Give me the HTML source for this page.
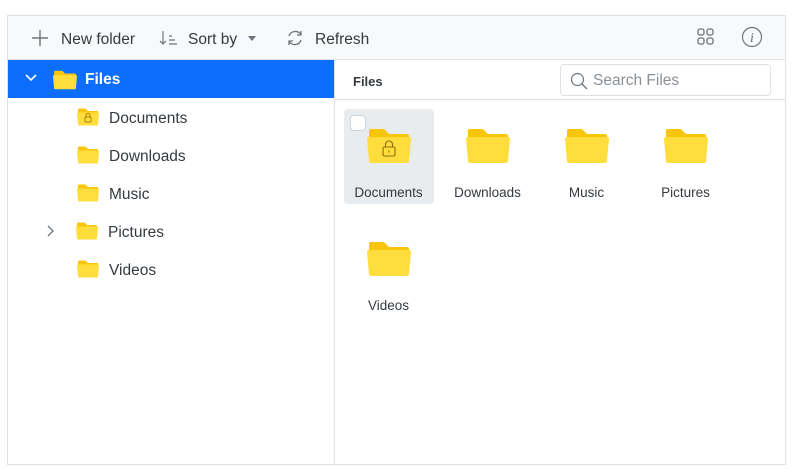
<!DOCTYPE html>
<html><head><meta charset="utf-8"><style>
*{box-sizing:border-box;margin:0;padding:0}
body{width:801px;height:469px;background:#fff;font-family:"Liberation Sans",sans-serif;position:relative;overflow:hidden;color:#212529}
.a{position:absolute}
.t{font-size:15.5px;color:#343a40}
.lbl{font-size:13.5px;color:#343a40;width:99px;text-align:center}
</style></head><body>
<svg width="0" height="0" style="position:absolute"><defs>
<symbol id="f" viewBox="0 0 44 36"><path d="M2 3q0-2 2-2h13l5 5h18q2 0 2 2v8H2z" fill="#f8c50b"/><path d="M0 11q0-2 2-2h40q2 0 2 2l-2 22q0 2-2 2H4q-2 0-2-2z" fill="#ffdd3c"/></symbol>
</defs></svg>
<div class="a" style="left:7px;top:15px;width:779px;height:450px;border:1px solid #dee2e6"></div>
<div class="a" style="left:8px;top:16px;width:777px;height:44px;background:#f8f9fa;border-bottom:1px solid #dee2e6"></div>
<!-- toolbar -->
<svg class="a" style="left:31px;top:29px" width="18" height="18"><path d="M9 1v16M1 9h16" stroke="#6c757d" stroke-width="1.4"/></svg>
<div class="a t" style="left:61px;top:31px">New folder</div>
<svg class="a" style="left:159px;top:29px" width="20" height="18"><path d="M4 2v13M1 12l3 3 3-3M10 7h3M10 11h6M10 15h8" stroke="#6c757d" stroke-width="1.2" fill="none"/></svg>
<div class="a t" style="left:188px;top:31px">Sort by</div>
<svg class="a" style="left:248px;top:36px" width="9" height="5"><path d="M0 0h8L4 5z" fill="#6c757d"/></svg>
<svg class="a" style="left:286px;top:29px" width="18" height="18"><path d="M3 7A6.5 6.5 0 0 1 15 6M15 11A6.5 6.5 0 0 1 3 12" stroke="#6c757d" stroke-width="1.3" fill="none"/><path d="M15 2v4h-4M3 16v-4h4" stroke="#6c757d" stroke-width="1.3" fill="none"/></svg>
<div class="a t" style="left:315px;top:31px">Refresh</div>
<svg class="a" style="left:697px;top:28px" width="18" height="18"><g fill="none" stroke="#6c757d" stroke-width="1.3"><rect x="1" y="1" width="6" height="6" rx="2"/><rect x="10" y="1" width="6" height="6" rx="2"/><rect x="1" y="10" width="6" height="6" rx="2"/><rect x="10" y="10" width="6" height="6" rx="2"/></g></svg>
<svg class="a" style="left:741px;top:26px" width="22" height="22"><circle cx="11" cy="11" r="9.5" fill="none" stroke="#6c757d" stroke-width="1.2"/><text x="11" y="16" font-family="Liberation Serif" font-style="italic" font-size="14" fill="#6c757d" text-anchor="middle">i</text></svg>
<!-- tree -->
<div class="a" style="left:8px;top:60px;width:326px;height:38px;background:#0d6efd"></div>
<svg class="a" style="left:25px;top:74px" width="12" height="8"><path d="M1 1l5 5 5-5" stroke="#fff" stroke-width="1.6" fill="none"/></svg>
<svg class="a" style="left:53px;top:70px" width="24" height="20"><use href="#f"/></svg>
<div class="a" style="left:85px;top:71px;color:#fff;font-size:15.5px;font-weight:bold">Files</div>
<svg class="a" style="left:77px;top:108px" width="22" height="18"><use href="#f"/><rect x="8" y="9" width="6" height="5" rx="1" fill="none" stroke="#a88408"/><path d="M9 9V7.5a2 2 0 0 1 4 0V9" fill="none" stroke="#a88408"/></svg>
<div class="a t" style="left:109px;top:110px">Documents</div>
<svg class="a" style="left:77px;top:146px" width="22" height="18"><use href="#f"/></svg>
<div class="a t" style="left:109px;top:148px">Downloads</div>
<svg class="a" style="left:77px;top:184px" width="22" height="18"><use href="#f"/></svg>
<div class="a t" style="left:109px;top:186px">Music</div>
<svg class="a" style="left:47px;top:225px" width="8" height="12"><path d="M1 1l5 5-5 5" stroke="#6c757d" stroke-width="1.3" fill="none"/></svg>
<svg class="a" style="left:76px;top:222px" width="22" height="18"><use href="#f"/></svg>
<div class="a t" style="left:108px;top:224px">Pictures</div>
<svg class="a" style="left:77px;top:260px" width="22" height="18"><use href="#f"/></svg>
<div class="a t" style="left:109px;top:262px">Videos</div>
<div class="a" style="left:334px;top:60px;width:1px;height:405px;background:#dee2e6"></div>
<!-- right -->
<div class="a" style="left:353px;top:74px;font-size:13px;font-weight:bold;color:#343a40">Files</div>
<div class="a" style="left:560px;top:64px;width:211px;height:32px;border:1px solid #dee2e6;border-radius:4px"></div>
<svg class="a" style="left:570px;top:72px" width="18" height="18"><circle cx="7.5" cy="7.5" r="6" fill="none" stroke="#6c757d" stroke-width="1.2"/><path d="M12 12l5 5" stroke="#6c757d" stroke-width="1.3"/></svg>
<div class="a" style="left:593px;top:72px;font-size:15.5px;color:#8a9096">Search Files</div>
<div class="a" style="left:335px;top:99px;width:450px;height:1px;background:#dee2e6"></div>
<div class="a" style="left:344px;top:109px;width:90px;height:95px;background:#e9ecef;border-radius:4px"></div>
<div class="a" style="left:350px;top:115px;width:16px;height:16px;background:#fff;border:1px solid #ced4da;border-radius:4px"></div>
<svg class="a" style="left:367px;top:128px" width="44" height="36"><use href="#f"/><rect x="16" y="19" width="12" height="9" rx="1.5" fill="none" stroke="#8a6f0c" stroke-width="1.1"/><path d="M18.5 19v-2.5a3.5 3.5 0 0 1 7 0V19M22 22.5v2" fill="none" stroke="#8a6f0c" stroke-width="1.1"/></svg>
<div class="a lbl" style="left:339px;top:185px">Documents</div>
<svg class="a" style="left:466px;top:128px" width="44" height="36"><use href="#f"/></svg>
<div class="a lbl" style="left:438px;top:185px">Downloads</div>
<svg class="a" style="left:565px;top:128px" width="44" height="36"><use href="#f"/></svg>
<div class="a lbl" style="left:537px;top:185px">Music</div>
<svg class="a" style="left:664px;top:128px" width="44" height="36"><use href="#f"/></svg>
<div class="a lbl" style="left:636px;top:185px">Pictures</div>
<svg class="a" style="left:367px;top:241px" width="44" height="36"><use href="#f"/></svg>
<div class="a lbl" style="left:339px;top:298px">Videos</div>
</body></html>
